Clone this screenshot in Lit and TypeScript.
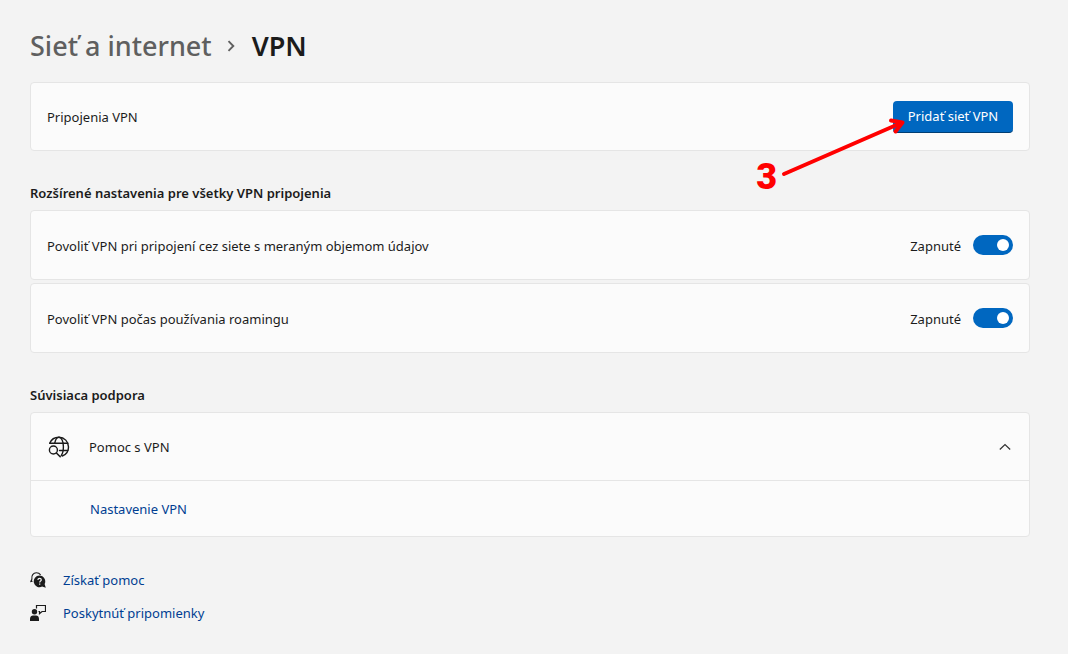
import { LitElement, html, css, svg } from "lit";
import { customElement, property, state } from "lit/decorators.js";

const controls = css`
  :host {
    display: block;
    box-sizing: border-box;
    font: 13px/20px "Noto Sans", "Open Sans", sans-serif;
    color: #1b1b1b;
  }
  * {
    box-sizing: border-box;
  }
  a {
    color: #003e92;
    text-decoration: none;
  }
  button {
    font: inherit;
    color: inherit;
    border: 0;
    margin: 0;
  }
  svg {
    display: block;
    flex: none;
  }
`;

@customElement("toggle-row")
export class ToggleRow extends LitElement {
  @property() label = "";
  @state() private on = true;

  static styles = [
    controls,
    css`
      .row {
        display: flex;
        align-items: center;
        justify-content: space-between;
        gap: 16px;
        min-height: 70px;
        padding: 0 16px;
        background: #fbfbfb;
        border: 1px solid #e5e5e5;
        border-radius: 4px;
      }
      .control {
        display: flex;
        align-items: center;
        gap: 12px;
      }
      .text {
        padding-top: 2px;
      }
      .switch {
        appearance: none;
        display: flex;
        align-items: center;
        width: 40px;
        height: 20px;
        margin: 0;
        padding: 0 4px;
        border-radius: 10px;
        background: #8a8a8a;
      }
      .switch::before {
        content: "";
        width: 12px;
        height: 12px;
        border-radius: 50%;
        background: #fff;
      }
      .switch:checked {
        justify-content: flex-end;
        background: #0067c0;
      }
    `,
  ];

  render() {
    return html`
      <div class="row">
        <label class="text" for="switch">${this.label}</label>
        <div class="control">
          <span class="text">${this.on ? "Zapnuté" : "Vypnuté"}</span>
          <input
            id="switch"
            class="switch"
            type="checkbox"
            role="switch"
            .checked=${this.on}
            @change=${() => (this.on = !this.on)}
          />
        </div>
      </div>
    `;
  }
}

const globeIcon = svg`
  <svg width="22" height="22" viewBox="0 0 22 22" fill="none" stroke="#1b1b1b" stroke-width="1.4" stroke-linecap="round" aria-hidden="true">
    <path d="M1.700 7.300C3.100 3.800 6.700 1.300 11 1.300c5.400 0 9.500 4.300 9.500 9.700 0 4.200-2.500 7.700-6.200 9" />
    <path d="M6.700 7.300C7.400 3.700 9 1.300 11 1.300c2.500 0 4.400 4.200 4.400 9.500 0 3.600-.8 7-2.200 8.800" />
    <path d="M2 7.300h17.800M11.500 14.500h8.300" />
    <circle cx="5.400" cy="14" r="4" />
    <path d="M8.400 17l3.800 3.700" stroke-width="1.600" />
  </svg>
`;

const helpIcon = svg`
  <svg width="16" height="16" viewBox="0 0 16 16" aria-hidden="true">
    <path d="M1.300 9.200l.6-2.100C1.200 3.500 3.300.8 6.300.8c1.900 0 3.400.8 4.300 2.100" fill="none" stroke="#1b1b1b" stroke-width="1.100" />
    <path d="M0 10.300l1.200-3 1.600 2.500z" fill="#1b1b1b" />
    <path d="M9.500 3.600a5.800 5.800 0 0 1 5.100 8.500l1.200 3.600-3.700-1.100A5.800 5.800 0 1 1 9.500 3.600z" fill="#1b1b1b" />
    <path d="M7.900 8c0-1 .7-1.600 1.700-1.600s1.700.6 1.700 1.500c0 1.200-1.600 1.200-1.600 2.600M9.700 11.600v1.200" fill="none" stroke="#f3f3f3" stroke-width="1.200" />
  </svg>
`;

const feedbackIcon = svg`
  <svg width="16" height="16" viewBox="0 0 16 16" aria-hidden="true">
    <circle cx="4.500" cy="6.700" r="2.700" fill="#1b1b1b" />
    <path d="M0 16v-2.200C0 11.700 1.500 10.500 3 10.500h3c1.700 0 3 1.200 3 3.300V16z" fill="#1b1b1b" />
    <path d="M6.500 3.500v-3h9v6H12L9.500 8.600V6.500H8.500" fill="none" stroke="#1b1b1b" stroke-width="1.200" />
  </svg>
`;

@customElement("app-root")
export class AppRoot extends LitElement {
  @state() private open = true;

  static styles = [
    controls,
    css`
      :host {
        min-height: 100vh;
        background: #f3f3f3;
        padding: 28px 38px 30px 30px;
      }
      .crumbs {
        display: flex;
        align-items: center;
        margin: 0 0 18px;
        font-size: 27px;
        line-height: 36px;
        font-weight: 600;
      }
      .crumbs a {
        color: #5f5f5f;
        font-weight: 500;
      }
      .crumbs svg {
        margin: 0 16px 0 14px;
      }
      .card {
        background: #fbfbfb;
        border: 1px solid #e5e5e5;
        border-radius: 4px;
      }
      .connections {
        position: relative;
        display: flex;
        align-items: center;
        justify-content: space-between;
        min-height: 69px;
        padding: 0 16px;
      }
      .primary {
        min-width: 120px;
        height: 32px;
        padding: 0 12px;
        border-bottom: 1px solid #003e73;
        border-radius: 4px;
        background: #0067c0;
        color: #fff;
      }
      .arrow {
        position: absolute;
        right: 120px;
        top: 30px;
      }
      .step {
        position: absolute;
        right: 252px;
        top: 74px;
        font: 900 36px/40px Roboto, sans-serif;
        color: #f00;
      }
      h2 {
        margin: 32px 0 7px;
        font-size: 13px;
        line-height: 20px;
        font-weight: 600;
      }
      .rows {
        display: grid;
        gap: 3px;
      }
      .expander {
        display: flex;
        align-items: center;
        width: 100%;
        height: 67px;
        padding: 0 17px;
        gap: 19px;
        background: none;
        text-align: left;
      }
      .expander span {
        flex: 1;
      }
      .closed {
        transform: scaleY(-1);
      }
      .panel {
        border-top: 1px solid #e5e5e5;
        padding: 18px 59px 17px;
      }
      .footer {
        display: grid;
        justify-items: start;
        gap: 13px;
        margin-top: 33px;
      }
      .footer a {
        display: flex;
        align-items: center;
        gap: 17px;
      }
    `,
  ];

  render() {
    return html`
      <h1 class="crumbs">
        <a href="#network">Sieť a internet</a>
        <svg width="10" height="12" viewBox="0 0 10 12" aria-hidden="true">
          <path d="M2.500 1.200l4.800 4.800-4.800 4.800" fill="none" stroke="#5f5f5f" stroke-width="1.900" />
        </svg>
        <span>VPN</span>
      </h1>

      <section class="card connections">
        <span>Pripojenia VPN</span>
        <button class="primary">Pridať sieť VPN</button>
        <svg class="arrow" width="130" height="66" viewBox="0 0 130 66" aria-hidden="true">
          <path d="M5 61L122 10" stroke="#f00" stroke-width="4" stroke-linecap="round" />
          <path d="M112 7.500L123.500 9.500L116.500 18.500" fill="none" stroke="#f00" stroke-width="4" stroke-linecap="round" stroke-linejoin="round" />
        </svg>
        <span class="step">3</span>
      </section>

      <h2>Rozšírené nastavenia pre všetky VPN pripojenia</h2>
      <div class="rows">
        <toggle-row label="Povoliť VPN pri pripojení cez siete s meraným objemom údajov"></toggle-row>
        <toggle-row label="Povoliť VPN počas používania roamingu"></toggle-row>
      </div>

      <h2>Súvisiaca podpora</h2>
      <section class="card">
        <button class="expander" aria-expanded=${this.open} @click=${() => (this.open = !this.open)}>
          ${globeIcon}
          <span>Pomoc s VPN</span>
          <svg class=${this.open ? "" : "closed"} width="14" height="8" viewBox="0 0 14 8" aria-hidden="true">
            <path d="M1.800 6.500L7 1.500l5.200 5" fill="none" stroke="#333" stroke-width="1.200" />
          </svg>
        </button>
        ${this.open ? html`<div class="panel"><a href="#setup">Nastavenie VPN</a></div>` : ""}
      </section>

      <nav class="footer">
        <a href="#help">${helpIcon}<span>Získať pomoc</span></a>
        <a href="#feedback">${feedbackIcon}<span>Poskytnúť pripomienky</span></a>
      </nav>
    `;
  }
}
